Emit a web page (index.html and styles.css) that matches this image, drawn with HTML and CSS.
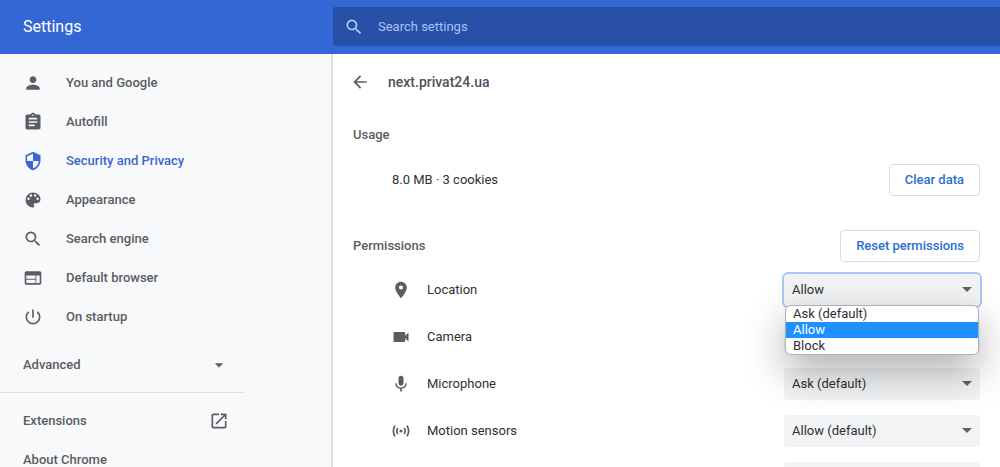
FILE: index.html
```html
<!DOCTYPE html>
<html lang="en">
<head>
<meta charset="utf-8">
<title>Settings</title>
<link rel="stylesheet" href="styles.css">
</head>
<body>
<div class="app">
  <header class="toolbar">
    <h1 class="toolbar-title">Settings</h1>
    <label class="search">
      <svg class="icon" viewBox="0 0 24 24"><path d="M15.5 14h-.79l-.28-.27A6.47 6.47 0 0 0 16 9.500 6.500 6.500 0 1 0 9.500 16c1.610 0 3.090-.59 4.230-1.570l.27.28v.79l5 4.990L20.490 19l-4.990-5zm-6 0C7.010 14 5 11.990 5 9.500S7.010 5 9.500 5 14 7.010 14 9.500 11.990 14 9.500 14z"/></svg>
      <input class="search-input" type="text" placeholder="Search settings" aria-label="Search settings">
    </label>
  </header>
  <div class="body">
    <nav class="sidebar">
      <div class="menu">
        <a class="menu-item" href="#people"><svg class="icon" viewBox="0 0 24 24"><path d="M12 12c2.210 0 4-1.790 4-4s-1.790-4-4-4-4 1.790-4 4 1.790 4 4 4zm0 2c-2.670 0-8 1.340-8 4v2h16v-2c0-2.660-5.330-4-8-4z"/></svg>You and Google</a>
        <a class="menu-item" href="#autofill"><svg class="icon" viewBox="0 0 24 24"><path d="M19 3h-4.180C14.400 1.840 13.300 1 12 1s-2.400.84-2.820 2H5c-1.100 0-2 .9-2 2v14c0 1.100.9 2 2 2h14c1.100 0 2-.9 2-2V5c0-1.100-.9-2-2-2zm-7 0c.55 0 1 .45 1 1s-.45 1-1 1-1-.45-1-1 .45-1 1-1zm2 14H7v-2h7v2zm3-4H7v-2h10v2zm0-4H7V7h10v2z"/></svg>Autofill</a>
        <a class="menu-item selected" href="#privacy" aria-current="page"><svg class="icon" viewBox="0 0 24 24"><path d="M12 1 3 5v6c0 5.550 3.840 10.740 9 12 5.160-1.260 9-6.450 9-12V5l-9-4zm0 10.990h7c-.53 4.120-3.280 7.790-7 8.940V12H5V6.300l7-3.110v8.800z"/></svg>Security and Privacy</a>
        <a class="menu-item" href="#appearance"><svg class="icon" viewBox="0 0 24 24"><path d="M12 3a9 9 0 0 0 0 18c.83 0 1.500-.67 1.500-1.500 0-.39-.15-.74-.39-1.010-.23-.26-.38-.61-.38-.99 0-.83.67-1.500 1.500-1.500H16c2.760 0 5-2.240 5-5 0-4.420-4.030-8-9-8zm-5.500 9a1.500 1.500 0 1 1 0-3 1.500 1.500 0 0 1 0 3zm3-4a1.500 1.500 0 1 1 0-3 1.500 1.500 0 0 1 0 3zm5 0a1.500 1.500 0 1 1 0-3 1.500 1.500 0 0 1 0 3zm3 4a1.500 1.500 0 1 1 0-3 1.500 1.500 0 0 1 0 3z"/></svg>Appearance</a>
        <a class="menu-item" href="#search"><svg class="icon" viewBox="0 0 24 24"><path d="M15.500 14h-.79l-.28-.27A6.470 6.470 0 0 0 16 9.500 6.500 6.500 0 1 0 9.500 16c1.610 0 3.090-.59 4.230-1.570l.27.28v.79l5 4.990L20.490 19l-4.990-5zm-6 0C7.010 14 5 11.990 5 9.500S7.010 5 9.500 5 14 7.010 14 9.500 11.990 14 9.500 14z"/></svg>Search engine</a>
        <a class="menu-item" href="#default-browser"><svg class="icon" viewBox="0 0 24 24"><path d="M20 4H4c-1.100 0-1.990.9-1.990 2L2 18c0 1.100.9 2 2 2h16c1.100 0 2-.9 2-2V6c0-1.100-.9-2-2-2zm-5 14H4v-4h11v4zm0-5H4V9h11v4zm5 5h-4V9h4v9z"/></svg>Default browser</a>
        <a class="menu-item" href="#startup"><svg class="icon" viewBox="0 0 24 24"><path d="M13 3h-2v10h2V3zm4.830 2.170-1.420 1.420A6.920 6.920 0 0 1 19 12a7 7 0 1 1-11.420-5.420L6.170 5.170A8.930 8.930 0 0 0 3 12a9 9 0 0 0 18 0c0-2.740-1.230-5.180-3.170-6.830z"/></svg>On startup</a>
      </div>
      <button class="menu-wide advanced" type="button">Advanced<svg class="icon" viewBox="0 0 24 24"><path d="m7 10 5 5 5-5z"/></svg></button>
      <div class="menu menu-extra">
        <a class="menu-wide" href="#extensions">Extensions<svg class="icon" viewBox="0 0 24 24"><path d="M19 19H5V5h7V3H5a2 2 0 0 0-2 2v14a2 2 0 0 0 2 2h14c1.100 0 2-.9 2-2v-7h-2v7zM14 3v2h3.590l-9.830 9.830 1.410 1.410L19 6.410V10h2V3h-7z"/></svg></a>
        <a class="menu-wide" href="#about">About Chrome</a>
      </div>
    </nav>
    <main class="content">
      <div class="page-head">
        <button class="back" type="button" aria-label="Back"><svg class="icon" viewBox="0 0 24 24"><path d="M20 11H7.830l5.590-5.590L12 4l-8 8 8 8 1.410-1.410L7.830 13H20v-2z"/></svg></button>
        <h2 class="page-title">next.privat24.ua</h2>
      </div>
      <h3 class="section-title">Usage</h3>
      <div class="usage">
        <span>8.0 MB · 3 cookies</span>
        <button class="button" type="button">Clear data</button>
      </div>
      <div class="permissions-head">
        <h3 class="section-title">Permissions</h3>
        <button class="button" type="button">Reset permissions</button>
      </div>
      <div class="permission">
        <svg class="icon" viewBox="0 0 24 24"><path d="M12 2C8.130 2 5 5.130 5 9c0 5.250 7 13 7 13s7-7.750 7-13c0-3.870-3.130-7-7-7zm0 9.500a2.500 2.500 0 1 1 0-5 2.500 2.500 0 0 1 0 5z"/></svg>
        <label for="location">Location</label>
        <div class="picker">
          <select class="select open" id="location"><option>Ask (default)</option><option selected>Allow</option><option>Block</option></select>
          <ul class="options" role="listbox" aria-label="Location">
            <li class="option" role="option">Ask (default)</li>
            <li class="option active" role="option" aria-selected="true">Allow</li>
            <li class="option" role="option">Block</li>
          </ul>
        </div>
      </div>
      <div class="permission">
        <svg class="icon" viewBox="0 0 24 24"><path d="M17 10.500V7c0-.55-.45-1-1-1H4c-.55 0-1 .45-1 1v10c0 .55.45 1 1 1h12c.55 0 1-.45 1-1v-3.500l4 4v-11l-4 4z"/></svg>
        <label for="camera">Camera</label>
        <div class="picker"><select class="select" id="camera"><option>Ask (default)</option><option>Allow</option><option>Block</option></select></div>
      </div>
      <div class="permission">
        <svg class="icon" viewBox="0 0 24 24"><path d="M12 14c1.660 0 3-1.340 3-3V5a3 3 0 0 0-6 0v6c0 1.660 1.340 3 3 3zm5.300-3c0 3-2.540 5.100-5.300 5.100S6.700 14 6.700 11H5c0 3.410 2.720 6.230 6 6.720V21h2v-3.280c3.280-.48 6-3.300 6-6.720h-1.700z"/></svg>
        <label for="microphone">Microphone</label>
        <div class="picker"><select class="select" id="microphone"><option>Ask (default)</option><option>Allow</option><option>Block</option></select></div>
      </div>
      <div class="permission">
        <svg class="icon" viewBox="0 0 24 24"><circle cx="12" cy="12" r="1.800"/><path class="wave" d="M4.800 5.500Q.8 12 4.800 18.500M19.200 5.500Q23.200 12 19.200 18.500M8.300 8.300Q5.500 12 8.300 15.700M15.700 8.300Q18.500 12 15.700 15.700"/></svg>
        <label for="motion">Motion sensors</label>
        <div class="picker"><select class="select" id="motion"><option>Allow (default)</option><option>Allow</option><option>Block</option></select></div>
      </div>
      <div class="permission last">
        <div class="picker"><select class="select" aria-label="Notifications"></select></div>
      </div>
    </main>
  </div>
</div>
</body>
</html>
```
FILE: styles.css
```css
* {
  box-sizing: border-box;
}

body {
  margin: 0;
  font-family: Roboto, "Liberation Sans", sans-serif;
  font-size: 13px;
  line-height: 16px;
  color: #2f3033;
  background: #fff;
}

h1, h2, h3, ul {
  margin: 0;
  padding: 0;
}

button, input, select {
  font: inherit;
}

.app {
  display: flex;
  flex-direction: column;
  height: 100vh;
  overflow: hidden;
}

.icon {
  flex: none;
  display: block;
  width: 20px;
  height: 20px;
  fill: #5a5d61;
}

.wave {
  fill: none;
  stroke: #5a5d61;
  stroke-width: 2;
}

.toolbar {
  flex: none;
  display: grid;
  grid-template-columns: 333px 1fr;
  align-items: center;
  padding: 7px 0 8px;
  background: #3367d6;
}

.toolbar-title {
  padding-left: 23px;
  font-size: 16px;
  font-weight: 400;
  line-height: 20px;
  color: #fff;
}

.search {
  display: flex;
  align-items: center;
  gap: 14px;
  height: 39px;
  padding-left: 11px;
  border-radius: 2px 0 0 2px;
  background: #2850a7;
}

.search .icon {
  fill: #b4cdf7;
}

.search-input {
  flex: 1;
  min-width: 0;
  padding: 0;
  border: 0;
  outline: 0;
  color: #fff;
  background: none;
}

.search-input::placeholder {
  color: #a9c3f3;
  opacity: 1;
}

.body {
  flex: 1;
  display: grid;
  grid-template-columns: 333px 1fr;
  min-height: 0;
}

.sidebar {
  padding-top: 9px;
  border-right: 2px solid #dddfe2;
  font-weight: 500;
  background: #f8f9fb;
}

.menu {
  display: flex;
  flex-direction: column;
}

.menu-item,
.menu-wide {
  display: flex;
  align-items: center;
  height: 39px;
  padding: 0 23px;
  color: #5a5d61;
  text-decoration: none;
}

.menu-item {
  gap: 23px;
}

.menu-wide {
  justify-content: space-between;
  width: 252px;
}

.selected,
.selected .icon {
  color: #3b67cf;
  fill: #3b67cf;
}

.advanced {
  height: 47px;
  margin-top: 5px;
  border: 0;
  background: none;
}

.menu-extra {
  width: 245px;
  margin-top: 4px;
  padding-top: 8px;
  border-top: 1px solid #dfe1e4;
}

.content {
  min-width: 0;
  padding: 16px 20px 0;
}

.page-head {
  display: flex;
  align-items: center;
  gap: 18px;
  height: 24px;
}

.back {
  margin-left: -3px;
  padding: 0;
  border: 0;
  background: none;
}

.page-title {
  font-size: 14px;
  font-weight: 500;
  color: #505256;
}

.section-title {
  font-size: 13px;
  font-weight: 500;
  color: #5a5d61;
}

.page-head + .section-title {
  margin-top: 33px;
}

.usage {
  display: flex;
  align-items: center;
  justify-content: space-between;
  margin-top: 21px;
  padding-left: 39px;
}

.button {
  height: 32px;
  padding: 0 15px;
  border: 1px solid #dadce0;
  border-radius: 4px;
  font-weight: 500;
  color: #2a6fd0;
  background: #fff;
}

.permissions-head {
  display: flex;
  align-items: center;
  justify-content: space-between;
  margin: 34px 0 4px;
}

.permission {
  display: grid;
  grid-template-columns: 20px 1fr 196px;
  align-items: center;
  column-gap: 16px;
  height: 47px;
  padding-left: 38px;
}

.last .picker {
  grid-column: 3;
}

.picker {
  position: relative;
}

.select {
  display: block;
  width: 100%;
  height: 32px;
  padding: 0 8px;
  border: 0;
  border-radius: 4px;
  outline: 0;
  color: #2f3033;
  appearance: none;
  background: #f1f3f4 url("data:image/svg+xml,%3Csvg xmlns='http://www.w3.org/2000/svg' width='10' height='5'%3E%3Cpath d='M0 0h10L5 5z' fill='%235f6368'/%3E%3C/svg%3E") no-repeat right 8px center;
}

.select.open {
  box-shadow: 0 0 0 2px #a8c7f7;
}

.options {
  position: absolute;
  z-index: 2;
  top: 31px;
  left: 1px;
  right: 1px;
  overflow: hidden;
  border: 1px solid #aeb1ba;
  border-radius: 6px;
  list-style: none;
  background: #fff;
  box-shadow: 0 16px 40px rgba(0, 0, 0, 0.32);
}

.option {
  padding: 0 7px;
}

.option.active {
  color: #fff;
  background: #1e90ff;
}
```
